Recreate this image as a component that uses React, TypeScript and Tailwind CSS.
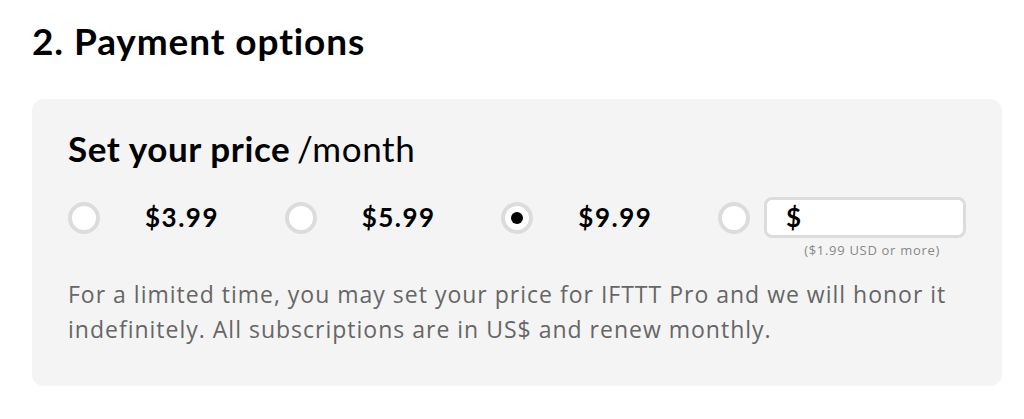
import React from 'react';

const prices = ['$3.99', '$5.99', '$9.99'];

const Radio: React.FC<{ checked?: boolean }> = ({ checked }) => (
  <span className="flex h-[32px] w-[32px] shrink-0 items-center justify-center rounded-full border-[4px] border-[#dcdcdc] bg-white">
    {checked && <span className="h-[12px] w-[12px] rounded-full bg-black" />}
  </span>
);

const App: React.FC = () => {
  return (
    <div className="h-[419px] w-[1024px] bg-white font-['Lato',sans-serif] text-black">
      <div className="px-[32px] pt-[16px]">
        <h1 className="text-[37px] font-bold leading-[50px] tracking-[0.9px]">2. Payment options</h1>
        <div className="mt-[33px] h-[287px] w-[970px] rounded-[12px] bg-[#f4f4f4] px-[36px] pt-[26px]">
          <h2 className="text-[35px] leading-[46px] tracking-[0.6px]">
            <span className="font-bold">Set your price</span>
            <span className="ml-[-3px]"> /month</span>
          </h2>
          <div className="mt-[26px] flex items-start">
            {prices.map((p, i) => (
              <label key={p} className="flex h-[41px] w-[218px] items-center">
                <Radio checked={i === 2} />
                <span className="ml-[45px] text-[26px] font-bold tracking-[1.5px]">{p}</span>
              </label>
            ))}
            <div className="flex items-start">
              <div className="flex h-[41px] items-center">
                <Radio />
              </div>
              <div className="ml-[14px] flex flex-col items-end">
                <div className="flex h-[41px] w-[202px] items-center rounded-[8px] border-[3px] border-[#dcdcdc] bg-white px-[19px] text-[26px] font-bold">
                  $
                </div>
                <span className="mr-[26px] mt-[4px] font-['Open_Sans',sans-serif] text-[13px] leading-[16px] tracking-[0.7px] text-[#888]">
                  ($1.99 USD or more)
                </span>
              </div>
            </div>
          </div>
          <p className="mt-[19px] w-[895px] font-['Open_Sans',sans-serif] text-[23px] leading-[35px] tracking-[1px] text-[#666]">
            For a limited time, you may set your price for IFTTT Pro and we will honor it indefinitely. All subscriptions are in US$ and renew monthly.
          </p>
        </div>
      </div>
    </div>
  );
};

export default App;
